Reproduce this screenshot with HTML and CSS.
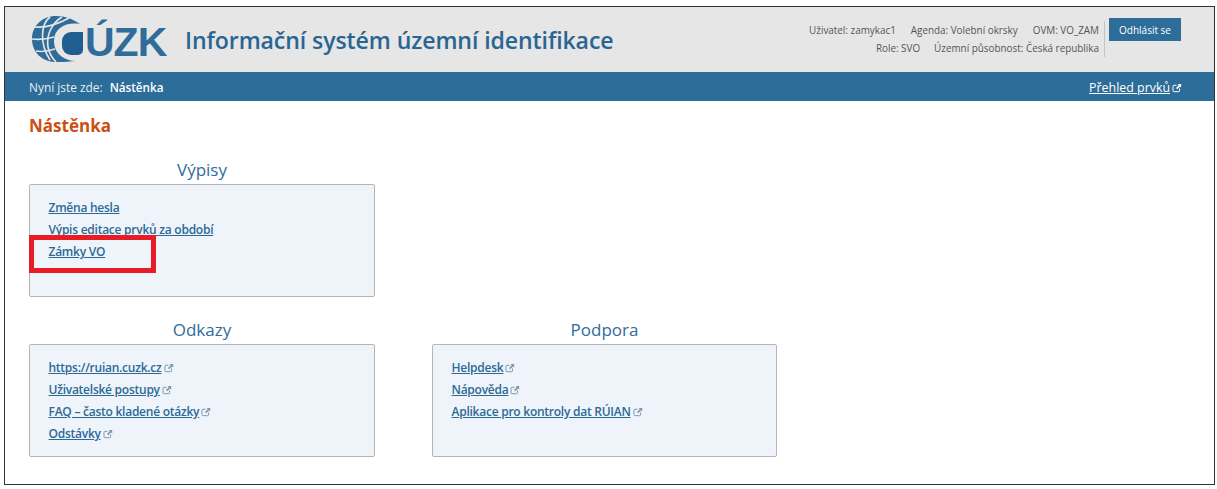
FILE: index.html
```html
<!DOCTYPE html>
<html lang="cs">
<head>
<meta charset="utf-8">
<title>Nástěnka</title>
<link rel="stylesheet" href="styles.css">
</head>
<body>
<svg class="defs" width="0" height="0" aria-hidden="true">
  <symbol id="ext" viewBox="0 0 10 10">
    <path d="M7.500 5.500v2.300a.9.9 0 0 1-.9.9H1.900a.9.9 0 0 1-.9-.9V3.200a.9.9 0 0 1 .9-.9h2.600" fill="none" stroke="currentColor" stroke-width="1"/>
    <path d="M5.600 1h3.600v3.600L8 3.400 5.200 6.200 4 5l2.800-2.800z" fill="currentColor"/>
  </symbol>
</svg>
<div class="frame">
  <header class="top">
    <div class="logo">
      <svg class="globe" viewBox="0 0 54 48" aria-hidden="true">
        <path d="M24 1C10 1 0 11 0 24s10 23 24 23c8 0 15-.5 21-1-9 .5-23-5-23-20C22 13 34 7 48 9 41 4 33 1 24 1z" fill="#2f6c9a"/>
        <g fill="none" stroke="#e6e6e6" stroke-width="1.600">
          <path d="M3 12C14 13 26 9 37 3"/>
          <path d="M0 24c7 1 15 0 22-2"/>
          <path d="M4 36c6 1 13 0 19-2"/>
          <path d="M18 2C9 9 7 28 18 45"/>
          <path d="M30 2C20 8 14 20 16 32c1 6 4 11 8 15"/>
        </g>
        <path d="M39 17h12v18a5 5 0 0 1-5 5h-7a9 9 0 0 1-9-9v-5a9 9 0 0 1 9-9z" fill="#1f5f8f"/>
      </svg>
      <span class="logo-text">ÚZK</span>
    </div>
    <h1 class="app-title">Informační systém územní identifikace</h1>
    <div class="user">
      <div class="user-info">
        <div class="user-row first"><span>Uživatel: zamykac1</span><span>Agenda: Volební okrsky</span><span>OVM: VO_ZAM</span></div>
        <div class="user-row"><span>Role: SVO</span><span>Územní působnost: Česká republika</span></div>
      </div>
      <a class="logout" href="#">Odhlásit se</a>
    </div>
  </header>
  <nav class="crumbs">
    <div><span class="here">Nyní jste zde:</span><strong class="current">Nástěnka</strong></div>
    <a class="overview" href="#">Přehled prvků<svg class="ext"><use href="#ext"/></svg></a>
  </nav>
  <main class="content">
    <h2 class="page-title">Nástěnka</h2>
    <div class="panels">
      <section class="panel">
        <h3>Výpisy</h3>
        <ul class="box">
          <li><a href="#">Změna hesla</a></li>
          <li><a href="#">Výpis editace prvků za období</a></li>
          <li class="marked"><a href="#">Zámky VO</a></li>
        </ul>
      </section>
      <div class="spacer"></div>
      <section class="panel">
        <h3>Odkazy</h3>
        <ul class="box">
          <li><a href="#">https://ruian.cuzk.cz</a><svg class="ext"><use href="#ext"/></svg></li>
          <li><a href="#">Uživatelské postupy</a><svg class="ext"><use href="#ext"/></svg></li>
          <li><a href="#">FAQ – často kladené otázky</a><svg class="ext"><use href="#ext"/></svg></li>
          <li><a href="#">Odstávky</a><svg class="ext"><use href="#ext"/></svg></li>
        </ul>
      </section>
      <section class="panel">
        <h3>Podpora</h3>
        <ul class="box">
          <li><a href="#">Helpdesk</a><svg class="ext"><use href="#ext"/></svg></li>
          <li><a href="#">Nápověda</a><svg class="ext"><use href="#ext"/></svg></li>
          <li><a href="#">Aplikace pro kontroly dat RÚIAN</a><svg class="ext"><use href="#ext"/></svg></li>
        </ul>
      </section>
    </div>
  </main>
</div>
</body>
</html>
```

FILE: styles.css
```css
*, *::after { box-sizing: border-box; }
html, body { margin: 0; padding: 0; background: #fff; }
body { font-family: "Open Sans", "Noto Sans", "Liberation Sans", sans-serif; color: #333; }
.defs { position: absolute; }
.frame { margin: 6px 2px 0 4px; height: 479px; border: 1px solid #333; background: #fff; }

.top { height: 65px; background: #e6e6e6; display: flex; align-items: flex-start; padding-left: 27px; }
.logo { display: flex; align-items: flex-start; height: 48px; margin-top: 8px; width: 153px; }
.globe { width: 54px; height: 48px; flex: none; }
.logo-text { font-family: "Liberation Sans", sans-serif; font-weight: 700; font-size: 41px; line-height: 47px; color: #2f6c9a; letter-spacing: -1px; margin-top: 4px; margin-left: -1px; }
.app-title { margin: 18px 0 0; font-size: 23.100px; line-height: 30px; font-weight: 600; color: #2a6592; letter-spacing: -0.1px; }
.user { margin-left: auto; display: flex; align-items: flex-start; margin-top: 11px; padding-right: 33px; }
.user-info { font-size: 9.900px; line-height: 18px; color: #555; border-right: 1px solid #c4c4c4; padding-right: 5px; height: 36px; margin-top: 3px; }
.user-row { display: flex; justify-content: flex-end; gap: 14px; }
.user-row.first { gap: 15px; }
.logout { width: 72px; height: 23px; margin-left: 4px; background: #2c6d99; color: #fff; font-size: 10px; line-height: 24px; text-align: center; text-decoration: none; }

.crumbs { height: 29px; background: #2c6d99; color: #fff; display: flex; justify-content: space-between; align-items: center; padding: 1px 32px 0 24px; font-size: 11.900px; }
.here { margin-right: 7px; color: #e8eef3; }
.current { font-weight: 600; font-size: 11.700px; }
.overview { color: #fff; font-size: 12.400px; }
.crumbs .ext { color: #fff; }

.content { padding: 14px 0 0 24px; }
.page-title { margin: 0 0 20px; font-size: 17px; line-height: 22px; font-weight: 700; color: #cc4f14; }
.panels { display: grid; grid-template-columns: 346px 345px; column-gap: 57px; row-gap: 20px; }
.spacer { height: 1px; }
.panel h3 { margin: 0; font-size: 17px; line-height: 26px; font-weight: 400; color: #2f6c9a; text-align: center; }
.box { list-style: none; margin: 1px 0 0; padding: 12px 18.500px 0; height: 113px; background: #eff4fa; border: 1px solid #b5b5b5; border-radius: 2px; }
.box li { height: 22px; font-size: 12px; line-height: 22px; white-space: nowrap; letter-spacing: -0.25px; }
.box a { color: #2b6a96; font-weight: 600; }
.ext { width: 10px; height: 10px; margin-left: 2px; color: #7f98ab; vertical-align: -1px; }
.marked { position: relative; }
.marked::after { content: ""; position: absolute; left: -20px; top: -6px; width: 127px; height: 38px; border: 5px solid #e81c24; }
```
